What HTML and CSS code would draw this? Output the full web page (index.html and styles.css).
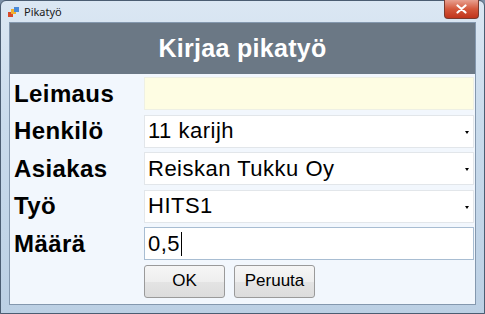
FILE: index.html
```html
<!DOCTYPE html>
<html lang="fi">
<head>
    <meta charset="UTF-8">
    <title>Pikatyö</title>
    <link rel="stylesheet" href="styles.css">
</head>
<body>
    <div class="window">
        <div class="titlebar">
            <svg class="app-icon" width="11" height="10" viewBox="0 0 11 10">
                <rect x="0" y="5" width="5" height="5" fill="#d84a2a"/>
                <rect x="3" y="2" width="5" height="5" fill="#f0b030"/>
                <rect x="6" y="0" width="5" height="5" fill="#4a8ad8"/>
            </svg>
            <span class="title-text">Pikatyö</span>
            <div class="close-btn">
                <svg width="11" height="10" viewBox="0 0 11 10">
                    <path d="M1.5 1.5 L9.5 8.5 M9.5 1.5 L1.5 8.5" stroke="#fff" stroke-width="2.2" stroke-linecap="round"/>
                </svg>
            </div>
        </div>

        <div class="client">
            <div class="header">Kirjaa pikatyö</div>

            <div class="form">
                <label class="label">Leimaus</label>
                <div class="field field-stamp"></div>

                <label class="label">Henkilö</label>
                <div class="field combo">11 karijh<span class="arrow"></span></div>

                <label class="label">Asiakas</label>
                <div class="field combo">Reiskan Tukku Oy<span class="arrow"></span></div>

                <label class="label">Työ</label>
                <div class="field combo">HITS1<span class="arrow"></span></div>

                <label class="label">Määrä</label>
                <div class="field field-focus">0,5<span class="caret"></span></div>

                <div></div>
                <div class="buttons">
                    <button class="button">OK</button>
                    <button class="button">Peruuta</button>
                </div>
            </div>
        </div>
    </div>
</body>
</html>
```

FILE: styles.css
```css
* {
    box-sizing: border-box;
    margin: 0;
    padding: 0;
}

body {
    width: 485px;
    height: 314px;
    overflow: hidden;
    background: #7b8fa6;
    font-family: 'Liberation Sans', Arial, sans-serif;
}

.window {
    width: 485px;
    height: 314px;
    display: flex;
    flex-direction: column;
    padding: 0 8px 8px 8px;
    border: 1px solid #4b5d72;
    border-radius: 6px 6px 0 0;
    background: linear-gradient(to bottom, #dbe7f3 0%, #c9dbec 40%, #bcd0e4 100%);
}

.titlebar {
    height: 21px;
    display: flex;
    align-items: center;
    position: relative;
}

.app-icon {
    margin-left: -1px;
}

.title-text {
    margin-left: 5px;
    font-family: 'Noto Sans', sans-serif;
    font-size: 11px;
    color: #1a1a1a;
}

.close-btn {
    position: absolute;
    top: -1px;
    right: -3px;
    width: 35px;
    height: 19px;
    display: flex;
    align-items: center;
    justify-content: center;
    border: 1px solid #7a3a2e;
    border-top: none;
    border-radius: 0 0 4px 4px;
    background: linear-gradient(to bottom, #e8a090 0%, #d4583c 50%, #c0341c 100%);
}

.client {
    flex: 1;
    display: flex;
    flex-direction: column;
    border: 1px solid #8498ae;
    background: #f2f7fd;
}

.header {
    height: 51px;
    background: #6b7885;
    color: #fff;
    font-size: 25px;
    font-weight: bold;
    text-align: center;
    line-height: 51px;
    letter-spacing: 0.3px;
}

.form {
    display: grid;
    grid-template-columns: 134px 1fr;
    grid-auto-rows: 33px;
    row-gap: 4.6px;
    padding: 3px 1px 0 0;
}

.label {
    padding-left: 4px;
    font-size: 24px;
    font-weight: bold;
    color: #000;
    display: flex;
    align-items: center;
    letter-spacing: 0.4px;
}

.field {
    position: relative;
    display: flex;
    align-items: center;
    padding-left: 3px;
    background: #fff;
    border: 1px solid #e2e6ea;
    font-size: 22px;
    color: #000;
    letter-spacing: 0.5px;
}

.field-stamp {
    background: #fefde3;
    border-color: #eef0e4;
}

.field-focus {
    border-color: #a8bdd2;
}

.arrow {
    position: absolute;
    right: 4px;
    top: 15px;
    width: 0;
    height: 0;
    border-left: 2.5px solid transparent;
    border-right: 2.5px solid transparent;
    border-top: 3px solid #000;
}

.caret {
    display: inline-block;
    width: 1px;
    height: 24px;
    margin-left: 1px;
    background: #000;
}

.buttons {
    display: flex;
    gap: 9px;
}

.button {
    width: 81px;
    height: 33px;
    font-family: 'Liberation Sans', Arial, sans-serif;
    font-size: 17px;
    color: #000;
    border: 1px solid #9a9a9a;
    border-radius: 3px;
    background: linear-gradient(to bottom, #f6f6f6 0%, #eeeeee 50%, #e4e4e4 51%, #dcdcdc 100%);
}
```
